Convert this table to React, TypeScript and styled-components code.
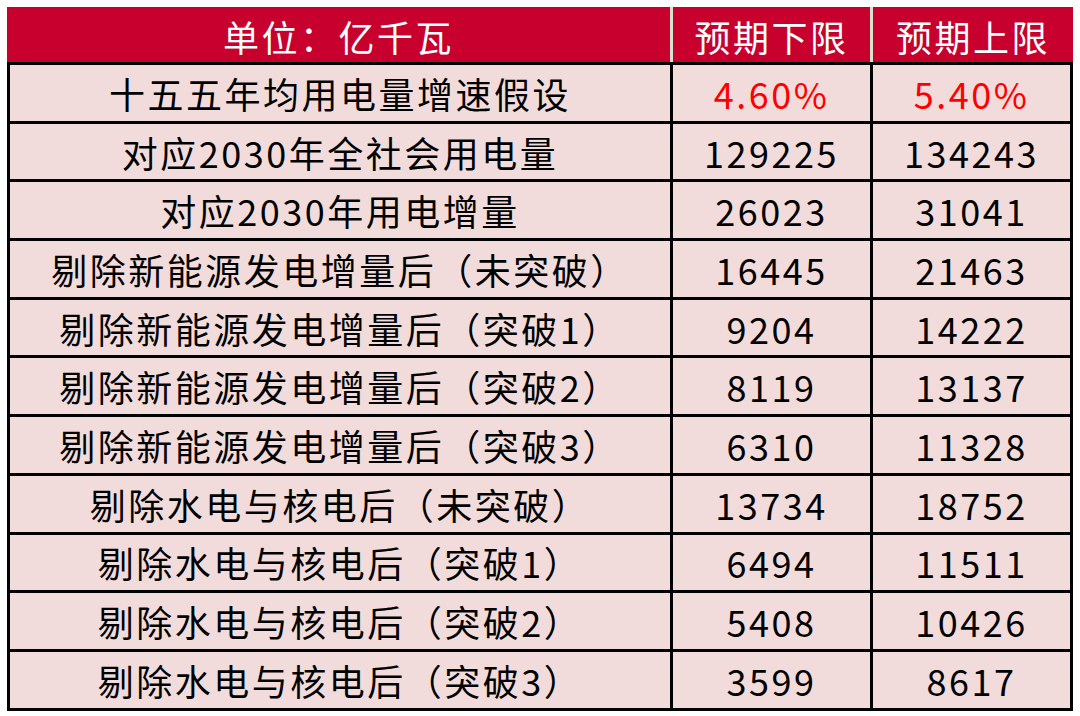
import styled, { createGlobalStyle } from 'styled-components'

const GlobalStyle = createGlobalStyle`
  body {
    margin: 0;
    background: #ffffff;
    font-family: 'Noto Sans CJK SC', 'Noto Sans', sans-serif;
  }
`

const Rows = [
  { name: '十五五年均用电量增速假设', low: '4.60%', high: '5.40%', hot: true },
  { name: '对应2030年全社会用电量', low: '129225', high: '134243' },
  { name: '对应2030年用电增量', low: '26023', high: '31041' },
  { name: '剔除新能源发电增量后（未突破）', low: '16445', high: '21463' },
  { name: '剔除新能源发电增量后（突破1）', low: '9204', high: '14222' },
  { name: '剔除新能源发电增量后（突破2）', low: '8119', high: '13137' },
  { name: '剔除新能源发电增量后（突破3）', low: '6310', high: '11328' },
  { name: '剔除水电与核电后（未突破）', low: '13734', high: '18752' },
  { name: '剔除水电与核电后（突破1）', low: '6494', high: '11511' },
  { name: '剔除水电与核电后（突破2）', low: '5408', high: '10426' },
  { name: '剔除水电与核电后（突破3）', low: '3599', high: '8617' }
]

export default function App() {
  return (
    <Page>
      <GlobalStyle />
      <Table>
        <Header>
          <HeadCell>单位：亿千瓦</HeadCell>
          <HeadCell>预期下限</HeadCell>
          <HeadCell>预期上限</HeadCell>
        </Header>
        <Body>
          {Rows.map(r => (
            <Row key={r.name}>
              <Cell>{r.name}</Cell>
              <Cell $hot={r.hot}>{r.low}</Cell>
              <Cell $hot={r.hot}>{r.high}</Cell>
            </Row>
          ))}
        </Body>
      </Table>
    </Page>
  )
}

const Page = styled.div`
  padding: 7px;
`

const Table = styled.div`
  width: 1066px;
`

const Header = styled.div`
  display: grid;
  grid-template-columns: 663px 197px 200px;
  column-gap: 3px;
  height: 55px;
  background: #d9e2cf;
`

const HeadCell = styled.div`
  background: #c8002d;
  color: #ffffff;
  display: flex;
  align-items: center;
  justify-content: center;
  font-size: 36px;
  letter-spacing: 2.5px;
  padding-top: 2px;
`

const Body = styled.div`
  display: grid;
  row-gap: 3px;
  padding: 3px;
  background: #000000;
`

const Row = styled.div`
  display: grid;
  grid-template-columns: 660px 197px 197px;
  column-gap: 3px;
  height: 55.7px;
`

const Cell = styled.div<{ $hot?: boolean }>`
  background: #f2dcdb;
  color: ${p => (p.$hot ? '#ff0000' : '#000000')};
  display: flex;
  align-items: center;
  justify-content: center;
  font-size: 36px;
  letter-spacing: 2.5px;
  white-space: nowrap;
`
